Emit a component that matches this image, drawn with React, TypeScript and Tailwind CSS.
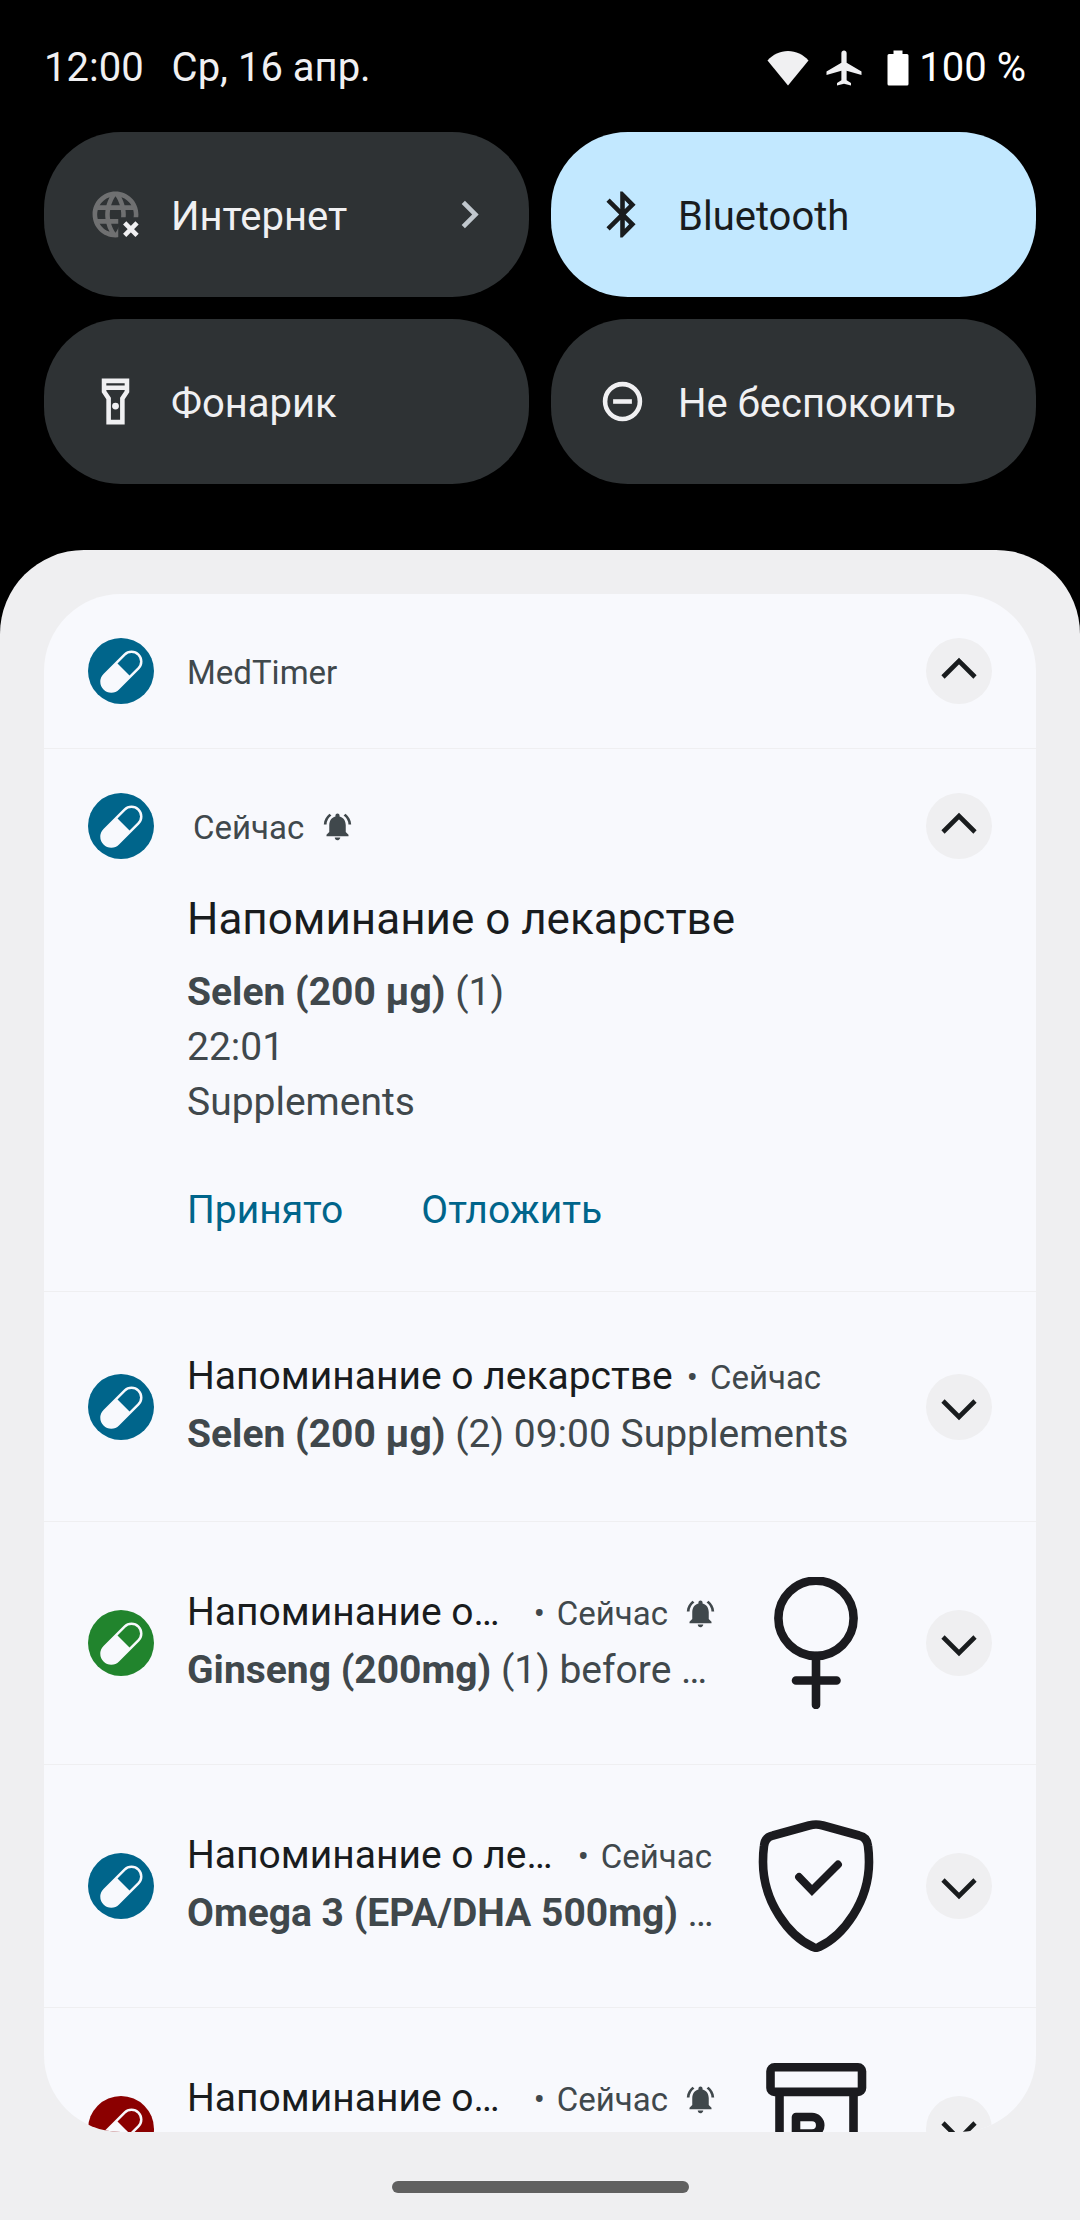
import type { ReactNode } from "react";
import {
  MdAirplanemodeActive,
  MdBluetooth,
  MdChevronRight,
  MdLanguage,
  MdNotificationsActive,
  MdOutlineFlashlightOn,
} from "react-icons/md";

function InternetOffIcon() {
  return (
    <svg viewBox="0 0 24 24" className="size-[55px]" aria-hidden="true">
      <defs>
        <clipPath id="globe-cut">
          <path d="M0 0H24V13.2H13.2V24H0Z" />
        </clipPath>
      </defs>
      <g clipPath="url(#globe-cut)">
        <MdLanguage size={24} color="#6f7071" />
      </g>
      <path d="M16 15.7L21.4 21.1M21.4 15.7L16 21.1" stroke="#f0f0f2" strokeWidth="2" />
    </svg>
  );
}

function DndIcon() {
  return (
    <svg viewBox="0 0 24 24" className="size-[55px]" fill="none" stroke="currentColor" strokeWidth="2" aria-hidden="true">
      <circle cx="12" cy="12" r="7.6" />
      <path d="M7.9 12H16.1" />
    </svg>
  );
}

function PillBadge({ color }: { color: string }) {
  return (
    <svg viewBox="0 0 66 66" className="size-[66px] shrink-0" aria-hidden="true">
      <circle cx="33" cy="33" r="33" fill={color} />
      <g transform="translate(33.4 33.6) rotate(-45)">
        <rect x="-25.3" y="-11" width="50.6" height="22" rx="11" fill="#f8f9fd" />
        <path d="M3 -8.5H14.3A8.5 8.5 0 0 1 14.3 8.5H3Z" fill={color} />
      </g>
    </svg>
  );
}

function ExpandButton({ open = false }: { open?: boolean }) {
  return (
    <button
      type="button"
      aria-label={open ? "Свернуть" : "Развернуть"}
      aria-expanded={open}
      className="size-[66px] shrink-0 rounded-full bg-[#efeff1]"
    >
      <svg viewBox="0 0 66 66" fill="none" stroke="#191c1e" strokeWidth="4.6" aria-hidden="true">
        <path d={open ? "M17 39L33 23L49 39" : "M17 27L33 43L49 27"} />
      </svg>
    </button>
  );
}

const drawing = "size-[132px] shrink-0";

function FemaleIcon() {
  return (
    <svg viewBox="0 0 132 132" className={drawing} fill="none" stroke="#1b1b1f" strokeWidth="8.6" strokeLinecap="round" aria-hidden="true">
      <circle cx="66" cy="41.3" r="37.6" />
      <path d="M66 79V128M46 103.5H86.5" />
    </svg>
  );
}

function ShieldIcon() {
  return (
    <svg viewBox="0 0 132 132" className={drawing} fill="none" stroke="#1b1b1f" strokeWidth="8.6" strokeLinecap="round" aria-hidden="true">
      <path d="M66 4.5Q69 4.5 73 5.5L109 15.5Q117 17 118 26Q119 33 119 42C119 82 93 116 69 127Q66 128.5 63 127C39 116 13 82 13 42Q13 33 14 26Q15 17 23 15.5L59 5.5Q63 4.5 66 4.5Z" />
      <path d="M49 57L62 70.5L88 44.5" strokeWidth="7.8" />
    </svg>
  );
}

function BottleIcon() {
  return (
    <svg viewBox="0 0 132 132" className={drawing} fill="none" stroke="#1b1b1f" strokeWidth="8.6" strokeLinecap="round" strokeLinejoin="round" aria-hidden="true">
      <rect x="20.5" y="4.3" width="91.5" height="24.6" rx="4" />
      <path d="M29.5 30V120Q29.5 128 37 128H95Q103.5 128 103.5 120V30" />
      <path d="M46 92V54H62A8 8 0 0 1 62 70.5H46M60 70.5L74 92M88 78L68 106" />
    </svg>
  );
}

function Tile({ icon, label, active = false, more = false }: { icon: ReactNode; label: string; active?: boolean; more?: boolean }) {
  return (
    <button
      type="button"
      aria-pressed={active}
      className={
        "flex h-[165px] items-center gap-7 rounded-[77px] pr-8 pl-11 text-left text-[40px] leading-[46px] " +
        (active ? "bg-[#c2e8ff] text-[#191c1e]" : "bg-[#2e3234] text-[#f0f0f2]")
      }
    >
      {icon}
      <span className="flex-1 pt-[5px] whitespace-nowrap">{label}</span>
      {more && <MdChevronRight className="size-[55px] text-[#c0c7cd]" aria-hidden="true" />}
    </button>
  );
}

function Notification({
  color,
  title,
  strong,
  rest,
  alarm = false,
  picture,
}: {
  color: string;
  title: string;
  strong?: string;
  rest?: string;
  alarm?: boolean;
  picture?: ReactNode;
}) {
  return (
    <li className={"flex shrink-0 items-center border-b border-[#efeff1] px-11 " + (picture ? "h-[243px]" : "h-[230px]")}>
      <PillBadge color={color} />
      <div className="ml-[33px] min-w-0 flex-1 pb-[6px]">
        <div className={"flex items-baseline text-[33px] leading-[58px] text-[#40484c] " + (alarm ? "" : "pr-[5px]")}>
          <h3 className={"truncate text-[39px] text-[#191c1e] " + (picture ? "flex-1" : "")}>{title}</h3>
          <span className="ml-[14px]">•</span>
          <span className="ml-3">Сейчас</span>
          {alarm && <MdNotificationsActive className="ml-4 size-[33px] self-center" aria-hidden="true" />}
        </div>
        <p className="h-[54px] truncate text-[39px] leading-[54px] text-[#40484c]">
          {strong && <b>{strong}</b>} {rest}
        </p>
      </div>
      {picture && <div className="mr-11 ml-[33px]">{picture}</div>}
      <ExpandButton />
    </li>
  );
}

export default function App() {
  return (
    <div className="flex h-screen flex-col overflow-hidden bg-black font-[Roboto,sans-serif]">
      <header className="flex h-[132px] shrink-0 items-center gap-7 pt-[3px] pr-[54px] pl-11 text-[40px] leading-[46px] text-[#f0f0f2]">
        <time>12:00</time>
        <span className="flex-1">Ср, 16 апр.</span>
        <div className="flex items-center">
          <svg viewBox="0 0 42 36" className="h-9 w-[42px]" fill="currentColor" aria-label="Wi-Fi">
            <path d="M21 35.5L0.5 10.5C6 4.5 13 1 21 1S36 4.5 41.5 10.5Z" />
          </svg>
          <MdAirplanemodeActive className="ml-[14px] size-[42px]" aria-label="Режим полета" />
          <svg viewBox="0 0 22 36" className="ml-[22px] h-9 w-[22px] text-white" fill="currentColor" aria-label="Батарея">
            <path d="M6.5 0.5H15.5V4H20Q21.5 4 21.5 5.5V34Q21.5 35.5 20 35.5H2Q0.5 35.5 0.5 34V5.5Q0.5 4 2 4H6.5Z" />
          </svg>
          <span className="ml-[10px] text-white">100 %</span>
        </div>
      </header>

      <section className="grid shrink-0 grid-cols-2 gap-[22px] px-11 pb-[66px]" aria-label="Быстрые настройки">
        <Tile icon={<InternetOffIcon />} label="Интернет" more />
        <Tile icon={<MdBluetooth className="size-[55px]" aria-hidden="true" />} label="Bluetooth" active />
        <Tile icon={<MdOutlineFlashlightOn className="size-[55px]" aria-hidden="true" />} label="Фонарик" />
        <Tile icon={<DndIcon />} label="Не беспокоить" />
      </section>

      <main className="flex min-h-0 flex-1 flex-col rounded-t-[84px] bg-[#efeff1] px-11 pt-11">
        <ul className="flex min-h-0 flex-1 flex-col overflow-hidden rounded-[77px] bg-[#f8f9fd]">
          <li className="flex h-[155px] shrink-0 items-center border-b border-[#efeff1] px-11">
            <PillBadge color="#00658b" />
            <h2 className="ml-[33px] flex-1 pt-[3px] text-[33px] leading-[38px] text-[#40484c]">MedTimer</h2>
            <ExpandButton open />
          </li>

          <li className="shrink-0 border-b border-[#efeff1] px-11 pt-11 pb-4">
            <div className="flex items-center text-[33px] leading-[38px] text-[#40484c]">
              <PillBadge color="#00658b" />
              <span className="ml-[39px] pt-[3px]">Сейчас</span>
              <MdNotificationsActive className="ml-[17px] size-[33px]" aria-hidden="true" />
              <span className="flex-1" />
              <ExpandButton open />
            </div>
            <div className="pt-[34px] pl-[99px]">
              <h3 className="text-[44px] leading-[52px] text-[#191c1e]">Напоминание о лекарстве</h3>
              <p className="mt-5 text-[39px] leading-[55px] text-[#40484c]">
                <b>Selen (200 µg)</b> (1)
                <br />
                22:01
                <br />
                Supplements
              </p>
              <div className="mt-[14px] flex h-[131px] gap-[78px] text-[39px] leading-[46px] text-[#00658b]">
                <button type="button">Принято</button>
                <button type="button">Отложить</button>
              </div>
            </div>
          </li>

          <Notification color="#00658b" title="Напоминание о лекарстве" strong="Selen (200 µg)" rest="(2) 09:00 Supplements" />
          <Notification color="#21842d" title="Напоминание о…" strong="Ginseng (200mg)" rest="(1) before …" alarm picture={<FemaleIcon />} />
          <Notification color="#00658b" title="Напоминание о ле…" strong="Omega 3 (EPA/DHA 500mg)" rest="…" picture={<ShieldIcon />} />
          <Notification color="#8b0000" title="Напоминание о…" alarm picture={<BottleIcon />} />
        </ul>
        <div className="flex h-[88px] shrink-0 items-center justify-center pt-[22px]">
          <div className="h-3 w-[297px] rounded-full bg-[#606060]" />
        </div>
      </main>
    </div>
  );
}
